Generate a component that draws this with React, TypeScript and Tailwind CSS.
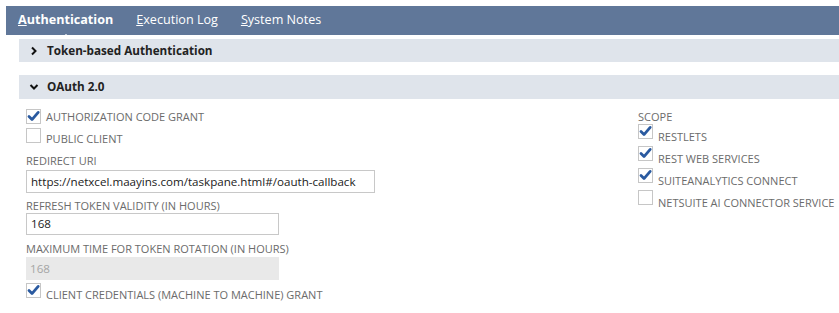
import React from 'react';

const font = "font-['Open_Sans',_'Liberation_Sans',_sans-serif]";

const CheckBox: React.FC<{ checked?: boolean }> = ({ checked }) => (
    <svg width="15" height="15" viewBox="0 0 15 15" className="shrink-0">
        <rect x="0.5" y="0.5" width="14" height="14" fill="#fff" stroke="#c6c6c6" />
        {checked && (
            <path d="M3 7.6 L6 10.6 L12.2 3.4" fill="none" stroke="#2a5aa0" strokeWidth="2.8" strokeLinecap="round" strokeLinejoin="round" />
        )}
    </svg>
);

const Chevron: React.FC<{ open?: boolean }> = ({ open }) => (
    <svg width="10" height="10" viewBox="0 0 10 10" className="shrink-0">
        {open ? (
            <path d="M1.5 3 L5 6.5 L8.5 3" fill="none" stroke="#111" strokeWidth="2" />
        ) : (
            <path d="M3 1.5 L6.5 5 L3 8.5" fill="none" stroke="#111" strokeWidth="2" />
        )}
    </svg>
);

const SectionHeader: React.FC<{ title: string; open?: boolean; className?: string }> = ({ title, open, className }) => (
    <div className={`flex items-center bg-[#dfe4eb] pl-[10px] ${className ?? ''}`}>
        <Chevron open={open} />
        <span className="ml-[8px] text-[11.7px] font-bold text-[#222]">{title}</span>
    </div>
);

const Label: React.FC<{ children: React.ReactNode; className?: string }> = ({ children, className }) => (
    <div className={`text-[11px] leading-[14px] text-[#6b6b6b] uppercase ${className ?? ''}`}>{children}</div>
);

const scopes = [
    { label: 'RESTLETS', checked: true },
    { label: 'REST WEB SERVICES', checked: true },
    { label: 'SUITEANALYTICS CONNECT', checked: true },
    { label: 'NETSUITE AI CONNECTOR SERVICE', checked: false },
];

export default function App() {
    return (
        <div className={`${font} w-[839px] h-[313px] bg-white overflow-hidden`}>
            {/* Tabs */}
            <div className="ml-[6px] mt-[6px] h-[29px] bg-[#607799] flex items-center pl-[12px] gap-[23px] text-[12.6px] text-white">
                <div className="relative font-bold">
                    <u>A</u>uthentication
                    <span className="absolute left-1/2 -translate-x-1/2 bottom-[-8px] w-0 h-0 border-l-[5px] border-r-[5px] border-b-[4px] border-l-transparent border-r-transparent border-b-white" />
                </div>
                <div><u>E</u>xecution Log</div>
                <div><u>S</u>ystem Notes</div>
            </div>

            {/* Sections */}
            <div className="ml-[19px]">
                <SectionHeader title="Token-based Authentication" className="mt-[4px] h-[23px]" />
                <SectionHeader title="OAuth 2.0" open className="mt-[13px] h-[24px]" />

                <div className="flex">
                    {/* Left column */}
                    <div className="ml-[7px] w-[612px] shrink-0">
                        <div className="mt-[10px] flex items-center h-[15px]">
                            <CheckBox checked />
                            <span className="ml-[5px] text-[11px] leading-[14px] text-[#6b6b6b] mt-[1px]">AUTHORIZATION CODE GRANT</span>
                        </div>
                        <div className="mt-[4px] flex items-start">
                            <CheckBox />
                            <span className="ml-[5px] text-[11px] leading-[14px] text-[#6b6b6b] mt-[4px]">PUBLIC CLIENT</span>
                        </div>

                        <Label className="mt-[8px]">Redirect URI</Label>
                        <div className="mt-[2px] w-[349px] h-[23px] border border-[#c8c8c8] flex items-center px-[4px] text-[11.6px] text-[#222] whitespace-nowrap">
                            https://netxcel.maayins.com/taskpane.html#/oauth-callback
                        </div>

                        <Label className="mt-[6px]">Refresh Token Validity (in hours)</Label>
                        <div className="w-[253px] h-[22px] border border-[#c8c8c8] flex items-center px-[4px] text-[11.6px] text-[#222]">
                            168
                        </div>

                        <Label className="mt-[7px]">Maximum Time for Token Rotation (in hours)</Label>
                        <div className="mt-[1px] w-[253px] h-[23px] bg-[#e9e9e9] flex items-center px-[4px] text-[11.6px] text-[#a5a5a5]">
                            168
                        </div>

                        <div className="mt-[3px] flex items-start">
                            <CheckBox checked />
                            <span className="ml-[5px] text-[11px] leading-[14px] text-[#6b6b6b] mt-[5px]">CLIENT CREDENTIALS (MACHINE TO MACHINE) GRANT</span>
                        </div>
                    </div>

                    {/* Right column: scope */}
                    <div>
                        <Label className="mt-[11px]">Scope</Label>
                        <div className="flex flex-col gap-[2px]">
                            {scopes.map((s) => (
                                <div key={s.label} className="flex items-start h-[20px]">
                                    <CheckBox checked={s.checked} />
                                    <span className="ml-[5px] mt-[6px] text-[11px] leading-[14px] text-[#6b6b6b] whitespace-nowrap">{s.label}</span>
                                </div>
                            ))}
                        </div>
                    </div>
                </div>
            </div>
        </div>
    );
}
